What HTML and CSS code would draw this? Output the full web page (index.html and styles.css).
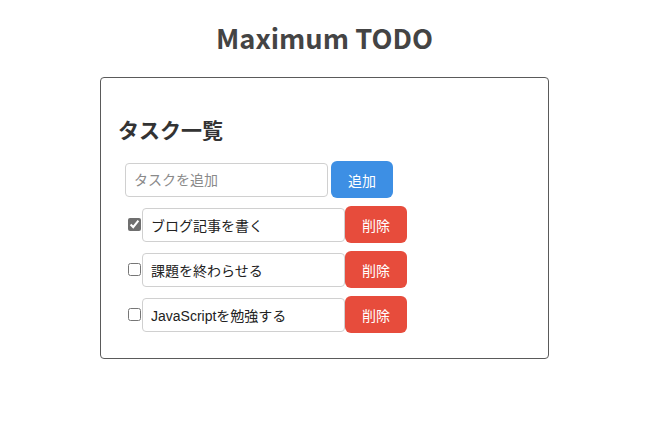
FILE: index.html
```html
<!DOCTYPE html>
<html lang="ja">
<head>
<meta charset="utf-8">
<title>Maximum TODO</title>
<link rel="stylesheet" href="styles.css">
</head>
<body>
<div class="page">
  <h1 class="title">Maximum TODO</h1>
  <div class="card">
    <h2 class="heading">タスク一覧</h2>
    <div class="add-row">
      <input class="field" type="text" placeholder="タスクを追加">
      <button class="btn btn-add">追加</button>
    </div>
    <ul class="list">
      <li class="item">
        <input class="check" type="checkbox" checked>
        <input class="field" type="text" value="ブログ記事を書く">
        <button class="btn btn-del">削除</button>
      </li>
      <li class="item">
        <input class="check" type="checkbox">
        <input class="field" type="text" value="課題を終わらせる">
        <button class="btn btn-del">削除</button>
      </li>
      <li class="item">
        <input class="check" type="checkbox">
        <input class="field" type="text" value="JavaScriptを勉強する">
        <button class="btn btn-del">削除</button>
      </li>
    </ul>
  </div>
</div>
</body>
</html>
```

FILE: styles.css
```css
html, body {
  margin: 0;
  padding: 0;
  background: #ffffff;
}

body {
  font-family: "Noto Sans CJK JP", "Noto Sans", sans-serif;
  color: #333333;
}

.page {
  width: 649px;
  display: flex;
  flex-direction: column;
  align-items: center;
}

.title {
  margin: 14px 0 17px;
  font-size: 27.3px;
  line-height: 46px;
  font-weight: 700;
  color: #444444;
}

.card {
  width: 449px;
  box-sizing: border-box;
  border: 1px solid #5a5a5a;
  border-radius: 4px;
  padding: 18px 17px 25px;
}

.heading {
  margin: 18px 0 17px;
  font-size: 21px;
  line-height: 30px;
  font-weight: 700;
  color: #333333;
}

.add-row {
  display: flex;
  align-items: center;
  gap: 3px;
  padding-left: 7px;
}

.list {
  list-style: none;
  margin: 0;
  padding: 0 0 0 6px;
}

.item {
  display: flex;
  align-items: center;
  margin-top: 8px;
}

.check {
  width: 13px;
  height: 13px;
  margin: 3px 1px 3px 4px;
  accent-color: #6f6f6f;
}

.field {
  width: 203px;
  height: 34px;
  box-sizing: border-box;
  border: 1px solid #d0d0d0;
  border-radius: 4px;
  padding: 0 8px;
  font-family: "Liberation Sans", "Noto Sans CJK JP", sans-serif;
  font-size: 14px;
  color: #222222;
  background: #ffffff;
  outline: none;
}

.field::placeholder {
  color: #8a8a8a;
}

.btn {
  width: 62px;
  height: 37px;
  border: none;
  border-radius: 6px;
  color: #ffffff;
  font-family: "Liberation Sans", "Noto Sans CJK JP", sans-serif;
  font-size: 14px;
  padding: 0;
}

.btn-add {
  background: #3d8fe4;
}

.btn-del {
  background: #e74c3c;
}
```
